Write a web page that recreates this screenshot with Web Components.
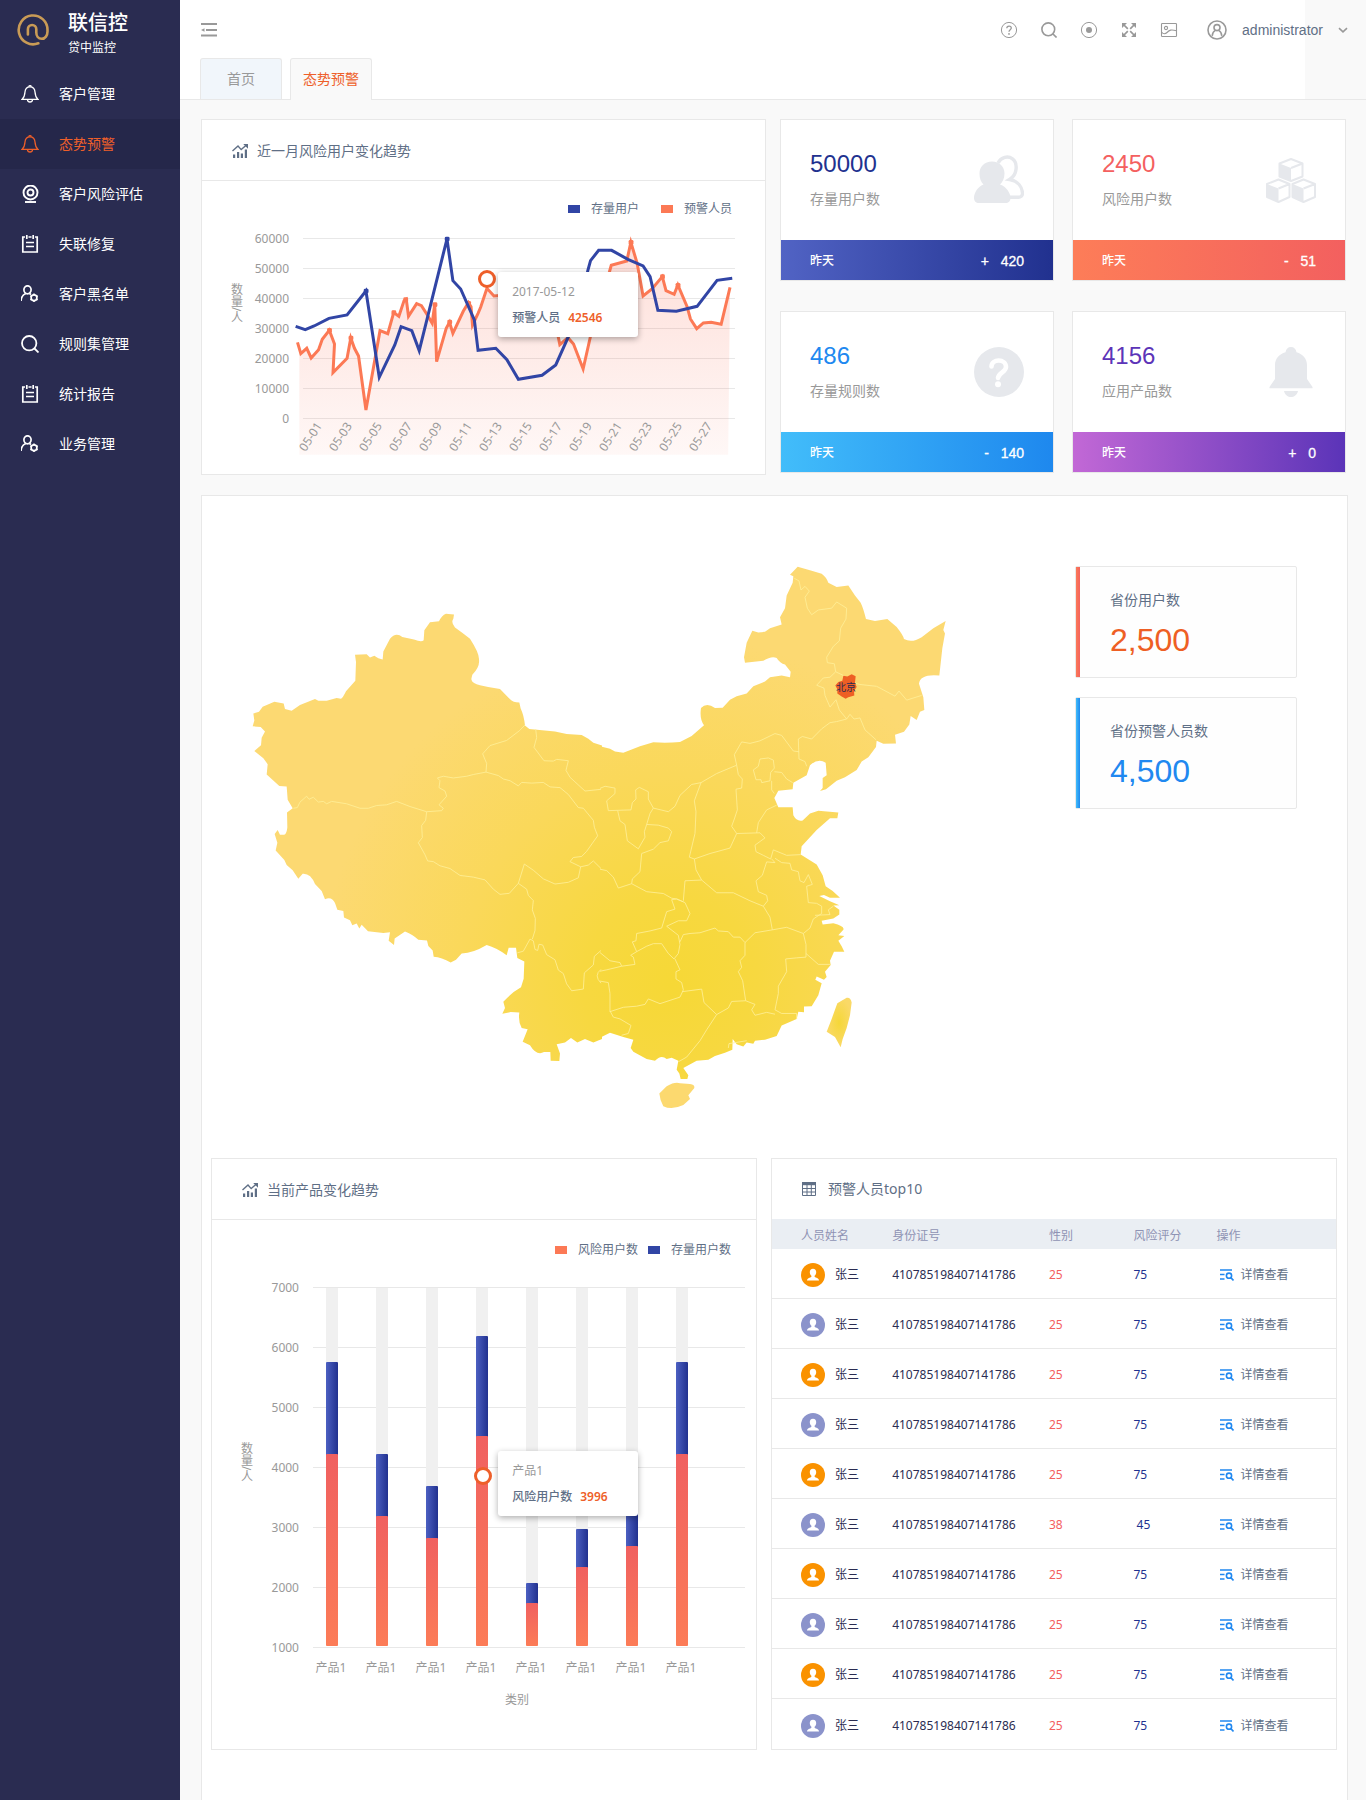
<!DOCTYPE html>
<html lang="zh-CN">
<head>
<meta charset="utf-8">
<title>联信控 - 态势预警</title>
<style>
  html, body { margin: 0; }
  body {
    background: #f9f9f9;
    color: #5f6f86;
    font: 14px/20px "Noto Sans", "Noto Sans CJK SC", sans-serif;
  }
</style>
</head>
<body>
<risk-app></risk-app>

<script>
const ICONS = {
  logo: ['0 0 32 32', `<g fill="none" stroke="#c99b56" stroke-width="2.600" stroke-linecap="round"><path d="M21.300 29.300A14.400 14.400 0 1 1 30.500 16v1.500c0 4-2.300 7.300-5.700 7.300-3.600 0-5.500-2.700-5.500-6.300v-3.300a4.200 4.200 0 0 0-8.400 0v5.300"/></g>`],
  bell: ['0 0 18 18', `<g fill="none" stroke="currentColor" stroke-width="1.3"><path d="M9 1.800C6 1.800 4.200 4.200 4 7c-.2 3-.6 5.200-2.800 7.300h15.600C14.600 12.200 14.200 10 14 7c-.2-2.800-2-5.200-5-5.200z"/><path d="M7.800 1.800a1.200 1.200 0 0 1 2.400 0M6.500 14.500a2.500 2.500 0 0 0 5 0"/></g>`],
  camera: ['0 0 18 18', `<g fill="none" stroke="currentColor" stroke-width="1.900"><circle cx="9.500" cy="7.500" r="7"/><circle cx="9.500" cy="7.500" r="3"/><path d="M4 17h11"/></g>`],
  notes: ['0 0 18 18', `<g fill="none" stroke="currentColor" stroke-width="1.700"><path d="M4 2H1.800v15h14.400V2H14M7.500 2h3"/><path d="M5.800 0v4M12.200 0v4M5 7.500h8M5 11.500h8"/></g>`],
  usergear: ['0 0 18 18', `<g fill="none" stroke="currentColor" stroke-width="1.700"><ellipse cx="6.500" cy="4.800" rx="3.600" ry="4"/><path d="M0 16c.2-4 2-6.400 4.800-7.500M8.500 8.500l1.500 1"/><circle cx="13" cy="12.800" r="2.900"/><path stroke-width="1.600" d="M13 8.600v1.600M13 15.400V17M9.400 10.700l1.300.8M15.300 14.100l1.300.8M9.400 14.900l1.300-.8M15.300 11.500l1.300-.8"/></g>`],
  search: ['0 0 18 18', `<g fill="none" stroke="currentColor" stroke-width="1.800"><circle cx="8.200" cy="8.200" r="7.200"/><path d="M13.500 13.500l4 4"/></g>`],
  fold: ['0 0 16 14', `<g fill="none" stroke="currentColor" stroke-width="1.800"><path d="M0 1h16M5 7h11M0 12.500h16"/></g><path fill="currentColor" d="M0 7l3.500-1.800v3.600z"/>`],
  help: ['0 0 18 18', `<g fill="none" stroke="currentColor" stroke-width="1"><circle cx="9" cy="9" r="7.600"/><path stroke-width="1.300" d="M6.800 7.300c0-3 4.500-2.900 4.500-.2C11.300 8.800 9 8.800 9 10.800"/></g><circle cx="9" cy="12.900" r=".9" fill="currentColor"/>`],
  target: ['0 0 18 18', `<circle cx="9" cy="9" r="7.600" fill="none" stroke="currentColor"/><circle cx="9" cy="9" r="3" fill="currentColor"/>`],
  expand: ['0 0 18 18', `<path fill="none" stroke="currentColor" stroke-width="1.700" d="M3.500 3.500l4.300 4.300M14.500 3.500l-4.300 4.300M3.500 14.500l4.300-4.300M14.500 14.500l-4.300-4.300"/><path fill="currentColor" d="M2 2h5L2 7zM16 2h-5l5 5zM2 16h5l-5-5zM16 16h-5l5-5z"/>`],
  image: ['0 0 18 18', `<g fill="none" stroke="currentColor" stroke-width="1.100"><rect x="1.500" y="2.500" width="15" height="13" rx=".8"/><circle cx="6" cy="7" r="1.600"/><path d="M1.500 11c2 2.500 4 2 5.500.5C9.500 9 11 8.300 16.500 9.800"/></g>`],
  user: ['0 0 20 20', `<g fill="none" stroke="currentColor" stroke-width="1.600"><circle cx="10" cy="10" r="9"/><circle cx="10" cy="7.600" r="3"/><path d="M5.200 15.800c.3-3 1.600-4.600 3.200-5.400M14.800 15.800c-.3-3-1.600-4.600-3.200-5.400"/></g>`],
  chevron: ['0 0 10 10', `<path fill="none" stroke="currentColor" stroke-width="1.600" d="M1 3.200l4 3.600 4-3.600"/>`],
  trend: ['0 0 16 16', `<path fill="currentColor" d="M1 11.500h2.200V15H1zM5 9h2.200v6H5zM8.800 10.500H11V15H8.800zM12.800 6.500H15V15h-2.200zM11.200 1H16v4.800z"/><path fill="none" stroke="currentColor" stroke-width="1.400" d="M.5 8L6 3l3.200 3.600L14.500 2"/>`],
  grid: ['0 0 14 14', `<path fill="none" stroke="currentColor" d="M.5.500h13v13H.5zM.5 6.500h13M.5 10h13M5 3v10.500M9.300 3v10.500"/><path fill="currentColor" d="M0 0h14v3.200H0z"/>`],
  detail: ['0 0 14 12', `<g fill="none" stroke="currentColor" stroke-width="1.600"><path d="M0 1h12M0 5.500h4.500M0 10h4.500"/><circle cx="9" cy="6.700" r="2.600"/><path d="M10.800 8.600l2.700 2.900"/></g>`],
  users: ['0 0 50 50', `<path fill="none" stroke="currentColor" stroke-width="3.400" d="M24 8c3-6 10-7.500 14.500-4.200C44 8 43.500 20 35.500 24.500c9 1.500 12.500 8 13 13.500.2 3-2 4.200-4 4.200H36"/><path fill="currentColor" d="M18 6.500c7.500 0 12.500 5 12.500 12 0 5-2 8.500-4.500 11 7 2.500 10.500 9 10.500 13.500 0 3-2 5-5 5H5c-3 0-5-2-5-5 0-5 3.500-11 9.500-13.500-2.500-2.500-4-6-4-11 0-7 5-12 12.500-12z"/>`],
  cubes: ['0 0 50 50', `<g fill="none" stroke="currentColor" stroke-width="2" stroke-linejoin="round"><path d="M13.500 8.500L25 4l11.500 4.500v13L25 26l-11.500-4.500z"/><path d="M25 13l11.500-4.500M1 29l11.500-4.500L23.500 29v13l-11 5L1 42zM12.500 33.500L23.500 29M26.500 29l11-4.500L49 29v13l-11.500 5-11-5zM37.500 33.500L49 29"/></g><path fill="currentColor" d="M13.500 8.500L25 13v13l-11.500-4.500zM1 29l11.500 4.500V47L1 42zM26.500 29l11 4.500V47l-11-5z"/>`],
  question: ['0 0 50 50', `<circle cx="25" cy="25" r="25" fill="currentColor"/><path fill="none" stroke="#fff" stroke-width="4.600" stroke-linecap="round" d="M17.500 19.500c0-8 14.500-8 14.500.5 0 5-7.500 5.500-8 11"/><circle cx="24" cy="37.300" r="3" fill="#fff"/>`],
  bigbell: ['0 0 50 50', `<path fill="currentColor" d="M25 0c3 0 5 2 5.500 5.200C37 7 41 12 41 18v14l5.500 8v1.200h-43V40L9 32V18C9 12 13 7 19.500 5.200 20 2 22 0 25 0zM18 44h14c-1 4-4 6-7 6s-6-2-7-6z"/>`],
  avatar: ['0 0 24 24', `<circle cx="12" cy="12" r="12" fill="currentColor"/><path fill="#fff" d="M12 5.800c2.300 0 3.300 1.600 3.200 3.600-.1 1.500-.8 2.600-1.600 3.300-.2 1 .2 1.300 1.200 1.700 2 .8 3.200 1.200 3.200 3.200H6c0-2 1.200-2.400 3.200-3.200 1-.4 1.400-.7 1.200-1.700-.8-.7-1.500-1.800-1.600-3.300-.1-2 .9-3.600 3.200-3.600z"/>`]
};

function define(name, render) {
  customElements.define(name, class extends HTMLElement {
    constructor() { super(); this.attachShadow({ mode: 'open' }); }
    connectedCallback() { this.shadowRoot.innerHTML = render(this); }
  });
}
const attr = (el, n) => el.getAttribute(n) || '';

define('ui-icon', el => {
  const [box, body] = ICONS[attr(el, 'name')];
  return `<style>:host{display:block;flex:none;width:18px;height:18px}svg{display:block;width:100%;height:100%}</style>
  <svg viewBox="${box}" aria-hidden="true">${body}</svg>`;
});

/* ---------- sidebar ---------- */
define('nav-item', el => `<style>
  :host{display:block}
  a{display:flex;align-items:center;gap:20px;height:50px;padding-left:21px;color:#fff;text-decoration:none;font-size:14px;line-height:20px}
  :host([active]) a{background:#25274a;color:#ee5f2a}
  </style><a href="#"><ui-icon name="${attr(el, 'icon')}"></ui-icon><span><slot></slot></span></a>`);

define('app-sidebar', () => `<style>
  :host{display:block;background:#2a2c51;color:#fff}
  .brand{display:flex;gap:19px;height:60px;padding:9px 0 0 17px}
  .brand ui-icon{width:32px;height:32px;margin-top:5px}
  strong{display:block;font-weight:500;font-size:20px;line-height:28px}
  small{display:block;font-size:12px;line-height:22px}
  </style>
  <div class="brand"><ui-icon name="logo"></ui-icon><div><strong>联信控</strong><small>贷中监控</small></div></div>
  <nav>
    <nav-item icon="bell">客户管理</nav-item>
    <nav-item icon="bell" active>态势预警</nav-item>
    <nav-item icon="camera">客户风险评估</nav-item>
    <nav-item icon="notes">失联修复</nav-item>
    <nav-item icon="usergear">客户黑名单</nav-item>
    <nav-item icon="search">规则集管理</nav-item>
    <nav-item icon="notes">统计报告</nav-item>
    <nav-item icon="usergear">业务管理</nav-item>
  </nav>`);

/* ---------- header ---------- */
define('app-header', () => `<style>
  :host{display:block;border-bottom:1px solid #e8e8e8;background:linear-gradient(#fff,#fff) no-repeat 0 0/calc(100% - 61px) 100%}
  button{display:flex;align-items:center;justify-content:center;border:0;background:none;padding:0;color:#999;cursor:pointer;font:inherit}
  .bar{display:flex;align-items:center;height:56px;padding:2px 18px 0 21px}
  .bar .fold{margin-right:auto}
  .fold ui-icon{width:16px;height:14px}
  .tool{width:40px;height:40px}
  .tool [name=search]{width:16px;height:16px}
  .user{margin-left:18px;gap:15px;font:14px/20px "Liberation Sans",sans-serif;color:#5f6f86}
  .user ui-icon{width:20px;height:20px;color:#999}
  .user ui-icon:last-child{width:10px;height:10px}
  .tabs{display:flex;gap:8px;padding-left:20px}
  .tabs a{box-sizing:border-box;width:82px;height:41px;border:1px solid #e8e8e8;border-bottom:0;border-radius:3px 3px 0 0;background:#f1f6fb;color:#999;text-align:center;text-decoration:none;line-height:39px}
  .tabs a.on{background:#f9f9f9;color:#ee5f2a;margin-bottom:-1px;height:42px}
  </style>
  <div class="bar">
    <button class="fold" aria-label="收起菜单"><ui-icon name="fold"></ui-icon></button>
    <button class="tool" aria-label="帮助"><ui-icon name="help"></ui-icon></button>
    <button class="tool" aria-label="搜索"><ui-icon name="search"></ui-icon></button>
    <button class="tool" aria-label="定位"><ui-icon name="target"></ui-icon></button>
    <button class="tool" aria-label="全屏"><ui-icon name="expand"></ui-icon></button>
    <button class="tool" aria-label="图片"><ui-icon name="image"></ui-icon></button>
    <button class="user"><ui-icon name="user"></ui-icon><span>administrator</span><ui-icon name="chevron"></ui-icon></button>
  </div>
  <div class="tabs"><a href="#">首页</a><a href="#" class="on">态势预警</a></div>`);

/* ---------- cards ---------- */
define('panel-card', el => `<style>
  :host{display:block;min-width:0;background:#fff;border:1px solid #e8e8e8}
  header{display:flex;align-items:center;gap:9px;height:58px;padding:2px 30px 0;border-bottom:1px solid #e8e8e8}
  :host([flush]) header{height:60px;padding-top:0;border-bottom:0;gap:12px}
  h2{margin:0;font-weight:400;font-size:14px;line-height:20px;color:#5f6f86}
  ui-icon{width:16px;height:16px;color:#5f6f86}
  :host([flush]) ui-icon{width:14px;height:14px}
  </style>
  <header><ui-icon name="${attr(el, 'icon')}"></ui-icon><h2>${attr(el, 'heading')}</h2></header><slot></slot>`);

define('stat-card', el => `<style>
  :host{display:block;background:#fff;border:1px solid #e8e8e8}
  .body{display:flex;justify-content:space-between;height:90px;padding:30px 29px 0}
  .num{font:24px/28px "Liberation Sans",sans-serif;color:${attr(el, 'color')}}
  .label{margin-top:11px;line-height:20px;color:#999}
  ui-icon{width:50px;height:50px;color:#e6e8ec;margin-top:5px}
  footer{display:flex;align-items:center;justify-content:space-between;height:38px;padding:2px 29px 0;color:#fff;font-size:12px;font-weight:500;background:linear-gradient(90deg,${attr(el, 'from')},${attr(el, 'to')})}
  .delta{font:14px/20px "Liberation Sans",sans-serif;white-space:pre;-webkit-text-stroke:.3px #fff}
  </style>
  <div class="body"><div><div class="num">${attr(el, 'value')}</div><div class="label"><slot></slot></div></div>
  <ui-icon name="${attr(el, 'icon')}"></ui-icon></div>
  <footer><span>昨天</span><span class="delta">${attr(el, 'sign')}   ${attr(el, 'delta')}</span></footer>`);

define('province-card', el => `<style>
  :host{display:flex;background:#fefefe;border:1px solid #e8e8e8;border-radius:2px}
  .stripe{width:4px;background:linear-gradient(90deg,${attr(el, 'from')},${attr(el, 'to')})}
  .text{padding:23px 30px 18px}
  .num{margin-top:11px;font:32px/38px "Liberation Sans",sans-serif;color:${attr(el, 'color')}}
  </style><div class="stripe"></div><div class="text"><div><slot></slot></div><div class="num">${attr(el, 'value')}</div></div>`);

define('chart-tip', el => `<style>
  :host{display:block;box-sizing:border-box;width:140px;padding:10px 14px 9px;background:#fff;border-radius:3px;box-shadow:0 2px 6px rgba(0,0,0,.32);font-size:12px;line-height:20px;color:#999}
  .row{display:flex;gap:8px;margin-top:6px;font-weight:500;color:#5f6f86;white-space:nowrap}
  b{font-weight:600;color:#ee5f2a}
  </style><div><slot></slot></div><div class="row"><span>${attr(el, 'label')}</span><b>${attr(el, 'value')}</b></div>`);

const CHART_CSS = `:host{display:block;position:relative}svg{display:block;width:100%;height:auto}
  text{font-size:12px;fill:#999}.lg{fill:#5f6f86}.grid{stroke:#e8e8e8}.v{writing-mode:vertical-rl}
  chart-tip{position:absolute}`;

/* ---------- line chart ---------- */
define('trend-chart', () => {
  const warn = '277,697 286,731 302,715 314,744 334,719 344,688 363,661 377,702 373,788 411,745 421,684 431,715 442,738 462,900 500,662 521,671 537,608 551,619 565,572 571,568 577,619 599,581 612,587 628,615 641,640 648,583 653,755 679,655 688,637 697,670 725,604 739,578 746,590 750,645 765,610 772,592 789,535 808,558 830,556 900,600 978,660 986,704 1008,683 1023,702 1049,777 1085,600 1120,486 1125,466 1167,453 1178,397 1195,460 1211,558 1235,537 1263,500 1273,542 1295,553 1305,525 1330,590 1339,627 1356,656 1374,639 1395,637 1422,643 1446,532';
  const stock = '272,649 298,659 322,648 362,625 411,615 462,543 498,802 540,705 557,650 586,662 606,722 681,387 697,512 718,537 755,630 765,721 813,715 843,749 874,808 938,796 975,765 1008,683 1040,600 1062,480 1069,452 1091,421 1126,421 1170,448 1211,468 1230,500 1251,601 1301,604 1357,589 1411,511 1452,505';
  let lines = '', labels = '', days = '';
  for (let i = 0; i < 7; i++) {
    const y = 238 + i * 30;
    lines += `<path class="grid" d="M303 ${y}.500H735"/>`;
    labels += `<text x="289" y="${y + 5}" text-anchor="end">${(6 - i) * 10000}</text>`;
  }
  for (let i = 0; i < 14; i++) {
    const x = 311 + i * 30;
    days += `<text transform="translate(${x + 3} 439) rotate(-57)" text-anchor="middle">05-${String(i * 2 + 1).padStart(2, '0')}</text>`;
  }
  const dot = (list, c) => list.map(([x, y]) => `<rect x="${x - 6}" y="${y - 7}" width="13" height="14" rx="4" fill="${c}"/>`).join('');
  return `<style>${CHART_CSS} polyline{fill:none;stroke-width:3;vector-effect:non-scaling-stroke}chart-tip{left:52.600%;top:31%}</style>
  <svg viewBox="202 181 563 293" role="img" aria-label="近一月风险用户变化趋势">
    <defs><linearGradient id="a" x2="0" y2="1"><stop offset="0" stop-color="#f9694f" stop-opacity=".22"/><stop offset="1" stop-color="#f9694f" stop-opacity=".05"/></linearGradient></defs>
    <rect x="568" y="205" width="12" height="8" fill="#3145a5"/><text class="lg" x="591" y="213">存量用户</text>
    <rect x="661" y="205" width="12" height="8" fill="#fc7955"/><text class="lg" x="684" y="213">预警人员</text>
    ${lines}
    <g transform="translate(195 110) scale(.37 .3333)">
      <polygon points="282,1034 282,715 ${warn.replace('277,697 ', '')} 1441,1034" fill="url(#a)"/>
      <polyline points="${warn}" stroke="#fc7955"/>
      ${dot([[363,661],[421,684],[537,608],[569,569],[648,584],[688,636],[739,580],[1178,397],[1263,500],[1305,526]], '#fc7955')}
      <polyline points="${stock}" stroke="#3145a5"/>
      ${dot([[462,543],[681,387]], '#3145a5')}
    </g>
    ${labels}${days}
    <text class="v" x="236" y="283">数量/人</text>
    <circle cx="487" cy="279" r="7.500" fill="#fff" stroke="#ee5f2a" stroke-width="3"/>
  </svg>
  <chart-tip label="预警人员" value="42546">2017-05-12</chart-tip>`;
});

/* ---------- stacked bars ---------- */
define('product-chart', () => {
  const bars = [[1362,1454],[1454,1516],[1486,1538],[1336,1436],[1583,1603],[1529,1567],[1500,1546],[1362,1454]];
  let out = '', labels = '', cols = '';
  for (let i = 0; i < 7; i++) {
    const y = 1287 + i * 60;
    out += `<path class="grid" d="M313 ${y}.500H745"/>`;
    labels += `<text x="299" y="${y + 5}" text-anchor="end">${(7 - i) * 1000}</text>`;
  }
  bars.forEach(([b, r], i) => {
    const x = 326 + i * 50;
    cols += `<rect x="${x}" y="1288" width="12" height="358" fill="#f0f0f0"/>
      <rect x="${x}" y="${b}" width="12" height="${1640 - b}" rx="1" fill="url(#b)"/>
      <rect x="${x}" y="${r}" width="12" height="${1646 - r}" rx="1" fill="url(#r)"/>`;
    labels += `<text x="${x + 5}" y="1672" text-anchor="middle">产品1</text>`;
  });
  return `<style>${CHART_CSS} chart-tip{left:52.600%;top:43.700%}</style>
  <svg viewBox="212 1220 544 529" role="img" aria-label="当前产品变化趋势">
    <defs><linearGradient id="b"><stop offset="0" stop-color="#4c60c2"/><stop offset="1" stop-color="#21318f"/></linearGradient>
    <linearGradient id="r" x2="0" y2="1"><stop offset="0" stop-color="#f06060"/><stop offset="1" stop-color="#fc7c57"/></linearGradient></defs>
    <rect x="555" y="1246" width="12" height="8" fill="#fc7955"/><text class="lg" x="578" y="1254">风险用户数</text>
    <rect x="648" y="1246" width="12" height="8" fill="#3145a5"/><text class="lg" x="671" y="1254">存量用户数</text>
    ${out}${cols}${labels}
    <text x="517" y="1704" text-anchor="middle">类别</text>
    <text class="v" x="246" y="1442">数量/人</text>
    <circle cx="483" cy="1476" r="7.500" fill="#fff" stroke="#ee5f2a" stroke-width="3"/>
  </svg>
  <chart-tip label="风险用户数" value="3996">产品1</chart-tip>`;
});

/* ---------- map ---------- */
define('china-map', () => `<style>
  :host{display:block}svg{display:block;width:100%;height:auto}
  .edge path{fill:none;stroke:#fff09a;stroke-opacity:.8;stroke-width:1;stroke-linejoin:round;vector-effect:non-scaling-stroke}
  text{font-size:10px;fill:#2a2c51}</style>
  <svg viewBox="240 546 720 572" role="img" aria-label="中国地图">
  <defs>
    <radialGradient id="g" gradientUnits="userSpaceOnUse" cx="670" cy="985" r="350"><stop offset="0" stop-color="#f6d836"/><stop offset=".25" stop-color="#f7d840"/><stop offset=".6" stop-color="#fad85a"/><stop offset="1" stop-color="#fcd972"/></radialGradient>
    <radialGradient id="t"><stop offset="0" stop-color="#f5d738"/><stop offset="1" stop-color="#fad967"/></radialGradient>
    <clipPath id="land">
      <path transform="translate(240 550) scale(.33333 .34435)" d="M1086 568L1060 560 1045 548 1025 537 980 534 945 527 868 520 855 510Q852 480 842 460L838 443Q818 442 812 435L780 404Q750 400 720 393 690 386 695 370L697 362Q720 340 717 318 718 300 690 258 670 242 645 225 632 210 640 200L642 187 618 185Q605 190 597 207L570 210 553 233 551 262Q545 269 522 260L487 253Q468 237 450 258L430 295 428 318 415 314 403 307 390 312 380 303 345 304 348 325 346 380 318 410Q308 430 303 432L290 430 260 438 235 438 225 433 180 450 155 467 135 462 131 446 103 441 68 455 57 470 40 475 43 495 38 512 62 514 75 527 65 545 63 567 43 584 70 605 83 622 80 652 118 685 140 687 143 725 158 750 141 762 142 805Q140 829 128 827L120 827 113 813 104 825 112 850 107 873 133 900 140 915 158 930 175 955 188 940Q212 938 225 970L245 990 255 1014Q275 1005 285 1025L292 1045 310 1048 312 1067 330 1075 337 1090 350 1085 358 1099 365 1088 384 1107 430 1112 450 1110 446 1135 462 1147 464 1128 495 1108Q520 1118 535 1132L561 1134 565 1150 578 1163 581 1181Q605 1183 632 1198L648 1190 665 1172Q700 1170 740 1147 770 1155 800 1177L806 1155 828 1155 832 1185 853 1195 851 1245 843 1270Q815 1285 790 1312L795 1330 787 1347 812 1342 838 1343Q834 1370 845 1388L863 1392 848 1428 870 1438Q890 1470 912 1458L931 1458 932 1483 958 1484 960 1462 950 1435 975 1430 993 1417 1012 1430 1035 1420 1060 1430 1086 1420Z"/>
      <path transform="translate(600 550) scale(.33333 .3635)" d="M-6 538L30 547 45 554 70 558 120 540 160 529Q200 532 240 528L275 512 312 482Q298 465 303 435 320 418 345 435L368 434 390 412 410 402 440 395 460 375 495 362 510 350 545 345 570 350 572 335 555 315Q540 312 530 297 515 290 490 305L435 310 432 295 440 255 457 222 475 227 495 225 510 215 545 205 540 185 555 160 560 125 578 90 580 72 570 68 593 46 635 57 665 65Q680 75 685 90L710 102 745 98 765 125 782 145Q790 160 798 190L825 195 862 190 890 212Q910 235 912 245 935 257 965 240L1000 215 1037 195 1030 220 1035 230 1027 270 1018 345Q960 340 957 368L970 405 973 440 960 445 950 468 932 457 928 480 912 500 885 508 888 532 850 533 830 525 828 542 805 570 785 582 770 605 735 625 710 635 678 658 660 663 668 655 668 627 680 620 677 585Q655 572 630 592L620 620 580 640 578 658 535 662 523 682 535 708 578 708 580 730Q590 748 608 744L630 725 655 717 715 722 712 738 690 738 650 770 605 815 602 838 650 865 668 895 677 925 698 938 720 957 690 957 672 949 658 952 690 966 718 977 700 978 718 990 718 1003 700 1014 665 1020 668 1030 700 1027Q735 1035 730 1045L715 1060 733 1062 715 1075 725 1090 733 1105 702 1105 690 1130 692 1142 675 1160 680 1175 672 1182 650 1173 646 1182 665 1192 655 1225 635 1255 612 1256 612 1272 595 1270 590 1290 545 1308 530 1337 495 1347 465 1350 460 1358 440 1355 430 1366 410 1360 398 1345 397 1375 375 1383 345 1392 325 1402 290 1405 250 1425 265 1445 262 1455 242 1455 238 1440 230 1430 235 1405 215 1397 200 1400Q183 1387 165 1405L140 1400 100 1380 92 1370 100 1347 70 1340 30 1328 -6 1345Z"/>
    </clipPath>
    <clipPath id="right"><rect x="600" y="546" width="360" height="572"/></clipPath>
  </defs>
  <rect x="240" y="546" width="720" height="572" fill="url(#g)" clip-path="url(#land)"/>
  <g transform="translate(600 550) scale(.33333 .3635)">
    <path fill="#fcd96f" d="M178 1495L200 1475Q225 1462 240 1467L270 1469Q285 1470 283 1480L265 1500 270 1510 250 1527Q215 1542 190 1530 180 1515 178 1495Z"/>
    <path fill="url(#t)" d="M755 1245Q752 1230 740 1232L712 1247 695 1290 680 1325 705 1340 722 1368 728 1345 740 1315 750 1280Z"/>
  </g>
  <g class="edge">
    <g transform="translate(240 550) scale(.33333 .34435)">
      <path d="M160 750L172 748 180 732 200 715 207 724 220 718 235 732 250 730 260 737 275 730 320 737 360 750 385 750 410 742 440 740 470 730 510 745 560 760 605 757 610 750 597 740 620 715 615 700 597 690 600 670 592 662 610 657 640 662 680 657 700 652 738 645 740 620 728 592 750 568 800 553 838 525 855 508"/>
      <path d="M738 645L775 655 790 665 810 670 835 685 845 675 875 677 910 675 930 688 960 690 985 710 1015 748 1030 750 1060 785 1063 805 1073 830 1040 875 1025 890 1000 893 990 905 1022 920 1045 915 1060 903 1083 925"/>
      <path d="M560 760L557 785 545 800 547 835 535 850 555 885 563 903 580 905 600 917 630 925 660 945 700 950 735 958 760 985 780 1000 808 997 835 968 853 912 880 930 910 955 945 970 985 965 1015 952 1022 920"/>
      <path d="M835 968L860 985 865 1003 880 1018 877 1045 886 1070 885 1105 877 1130M832 1170L850 1165 870 1130 880 1135 885 1160 893 1163 897 1145 908 1147 920 1175 945 1190 955 1220 970 1230 980 1260 995 1280 1030 1275 1033 1228 1060 1205 1063 1180 1083 1163M1083 1218Q1060 1235 1083 1258"/>
      <path d="M887 520L890 545 882 573 912 612 940 613 950 608 985 612 978 640 990 660 1035 700 1083 695"/>
    </g>
    <g clip-path="url(#right)"><g transform="translate(600 550) scale(.33333 .3635)">
      <path d="M583 78L597 85 603 110 615 100 628 113 615 130 622 160 635 178 655 165 695 160 710 143 740 160 738 190 722 215 718 250 700 265 680 295 682 310 703 313 707 335 730 345 740 360 780 370 830 375 885 402 897 388 920 413 965 400"/>
      <path d="M707 335L690 350 670 352 650 372 672 380 675 400 690 432 708 412 718 440 740 465 750 452 762 465 780 462 795 495 828 522"/>
      <path d="M740 465L710 472 690 475 665 492 635 520 607 513 595 520 597 575 615 582 620 595M597 555L580 553 545 510 525 505 480 525 450 532 425 528 403 563 410 592 350 615 303 640 275 645 240 675 225 705 205 720 160 710 145 685 145 665 118 653 107 660 108 685 97 695 93 715 25 717 20 690 45 670 45 655 15 650 -6 658"/>
      <path d="M410 592L415 618 427 630 425 655 408 658 412 715 403 740 395 760 410 780 480 778 495 792 465 812 468 830 490 840 512 850 520 825 560 840 602 838M470 778L475 750 500 715 530 702M303 640L283 690 288 720 285 780 268 845 283 850 330 835 390 820 410 780"/>
      <path d="M53 717L60 745 75 755 82 800 115 822 135 790 133 775 140 755 150 725 160 710M140 755L175 757 205 765 215 775 205 800 180 805 160 823 125 835 120 885 97 905 95 918 55 930 40 900 20 882 -6 877"/>
      <path d="M283 850L288 880 305 908 350 943 400 943 450 965 490 980 510 1010 517 1045 465 1053 435 1080 435 1115 420 1130 425 1148 415 1160 428 1185 437 1240 395 1242 385 1260 350 1278 320 1320 300 1350 260 1395 235 1408"/>
      <path d="M95 918L140 940 190 945 215 958 230 960 255 970 270 1000 260 1020 235 1020 200 1035 235 1060 240 1085 235 1110 222 1125 205 1110 185 1083 160 1083 140 1090 110 1105 97 1078 108 1075 110 1055 150 1048 185 1040 200 995 225 988 215 962 230 960 250 968M305 908L255 910 250 965"/>
      <path d="M240 1078L250 1058 270 1055 300 1053 345 1040 355 1048 385 1050 400 1065 420 1065 435 1080M515 850L525 860 500 858 487 895 468 910 475 940 500 950 503 965 490 980M525 848L545 860 570 862 575 880 595 885 600 910 612 915 625 893 637 920 620 925 625 970 650 972 665 980 665 1000 640 1015 630 1040 610 1055 560 1038 517 1045"/>
      <path d="M610 1055L618 1085 618 1120 590 1122 557 1125 560 1160 535 1200 535 1220 525 1265 545 1275 590 1275 590 1290M618 1110L655 1140 690 1140M437 1240L465 1250 455 1265 465 1280 500 1272 525 1277"/>
      <path d="M225 1125L240 1155 228 1160 228 1180 245 1190 250 1210 240 1230 180 1248 145 1235 135 1250 110 1255 70 1258 30 1270 30 1220 25 1190 -6 1185M247 1215L305 1208 312 1245 350 1278M-6 1160L20 1155 65 1145 105 1140 100 1120 92 1115 110 1105M65 1145L60 1135 30 1130 -6 1103M30 1268L40 1285 60 1290 93 1308 85 1330 65 1335"/>
      <path d="M460 605L475 595 480 575 505 572 520 578 523 600 512 612 510 635 485 640 483 632 468 632ZM523 610L545 612 560 630 578 640M515 635L515 660 523 670M645 1005L690 1003 685 990 700 980M385 1370L387 1358 440 1350"/>
    </g></g>
  </g>
  <path transform="translate(600 550) scale(.33333 .3635)" fill="#ee5f24" d="M730 346L742 348 755 342 767 347 765 365 770 377 762 388 763 400 745 405 737 409 725 403 712 395 712 383 706 373 715 363 727 360Z"/>
  <text x="846" y="691" text-anchor="middle">北京</text>
  </svg>`);

/* ---------- table ---------- */
define('warn-table', () => {
  let rows = '';
  for (let i = 0; i < 10; i++) {
    const odd = i === 5;
    rows += `<tr><td><span class="cell"><ui-icon name="avatar" class="${i % 2 ? 'b' : 'o'}"></ui-icon>张三</span></td><td>410785198407141786</td><td class="sex">${odd ? 38 : 25}</td><td class="score">${odd ? '&nbsp;45' : 75}</td><td><a href="#" class="cell"><ui-icon name="detail" class="d"></ui-icon>详情查看</a></td></tr>`;
  }
  return `<style>
  :host{display:block}
  table{width:100%;table-layout:fixed;border-collapse:separate;border-spacing:0;font-size:12px;line-height:20px;color:#2a2c51}
  th{box-sizing:border-box;height:30px;padding:3px 0 0;background:#eaeef3;color:#8f93b4;font-weight:400;text-align:left}
  td{box-sizing:border-box;height:50px;padding:3px 0 0;border-bottom:1px solid #e8e8e8}
  tr:last-child td{border-bottom:0}
  th:first-child,td:first-child{padding-left:29px}
  .c1{width:21.300%}.c2{width:27.800%}.c3{width:15%}.c4{width:14.700%}
  .cell{display:flex;align-items:center;gap:10px}
  a.cell{gap:6px;padding-left:4px;color:#5f6f86;text-decoration:none}
  ui-icon{width:24px;height:24px}.o{color:#fa9200}.b{color:#8b93cb}
  .d{width:14px;height:12px;color:#2088f0}
  .sex{color:#f4605f}.score{color:#21318f}
  </style>
  <table><colgroup><col class="c1"><col class="c2"><col class="c3"><col class="c4"><col></colgroup>
  <thead><tr><th>人员姓名</th><th>身份证号</th><th>性别</th><th>风险评分</th><th>操作</th></tr></thead><tbody>${rows}</tbody></table>`;
});

/* ---------- page ---------- */
define('risk-app', () => `<style>
  :host{display:flex;min-height:100vh}
  app-sidebar{flex:0 0 180px}
  main{display:flex;flex-direction:column;flex:1;min-width:0}
  .content{display:flex;flex-direction:column;flex:1;padding:19px 18px 0 21px}
  .top{display:grid;grid-template-columns:565fr 566fr;gap:14px;margin:0 2px 20px 0;align-items:start}
  .stats{display:grid;grid-template-columns:1fr 1fr;gap:30px 18px}
  .board{flex:1;background:#fff;border:1px solid #e8e8e8;border-bottom:0}
  .geo{display:flex;justify-content:space-between;align-items:flex-start;padding:50px 50px 40px 38px}
  china-map{flex:0 1 720px}
  .side{display:flex;flex-direction:column;gap:19px;flex:0 0 222px;margin-top:20px}
  .bottom{display:grid;grid-template-columns:546fr 566fr;gap:14px;padding:0 10px 50px 9px}
  </style>
  <app-sidebar></app-sidebar>
  <main>
    <app-header></app-header>
    <div class="content">
      <div class="top">
        <panel-card icon="trend" heading="近一月风险用户变化趋势"><trend-chart></trend-chart></panel-card>
        <div class="stats">
          <stat-card value="50000" color="#21318f" icon="users" sign="+" delta="420" from="#5163c4" to="#21318f">存量用户数</stat-card>
          <stat-card value="2450" color="#f4605f" icon="cubes" sign="-" delta="51" from="#fd7d58" to="#f3605f">风险用户数</stat-card>
          <stat-card value="486" color="#2088f0" icon="question" sign="-" delta="140" from="#42bdfa" to="#1e88ee">存量规则数</stat-card>
          <stat-card value="4156" color="#5c34b8" icon="bigbell" sign="+" delta="0" from="#c268d6" to="#5b34b8">应用产品数</stat-card>
        </div>
      </div>
      <section class="board">
        <div class="geo">
          <china-map></china-map>
          <div class="side">
            <province-card value="2,500" color="#ee5f24" from="#fb7a57" to="#f4625e">省份用户数</province-card>
            <province-card value="4,500" color="#2088f0" from="#42bdfa" to="#1e88ee">省份预警人员数</province-card>
          </div>
        </div>
        <div class="bottom">
          <panel-card icon="trend" heading="当前产品变化趋势"><product-chart></product-chart></panel-card>
          <panel-card flush icon="grid" heading="预警人员top10"><warn-table></warn-table></panel-card>
        </div>
      </section>
    </div>
  </main>`);
</script>
</body>
</html>
